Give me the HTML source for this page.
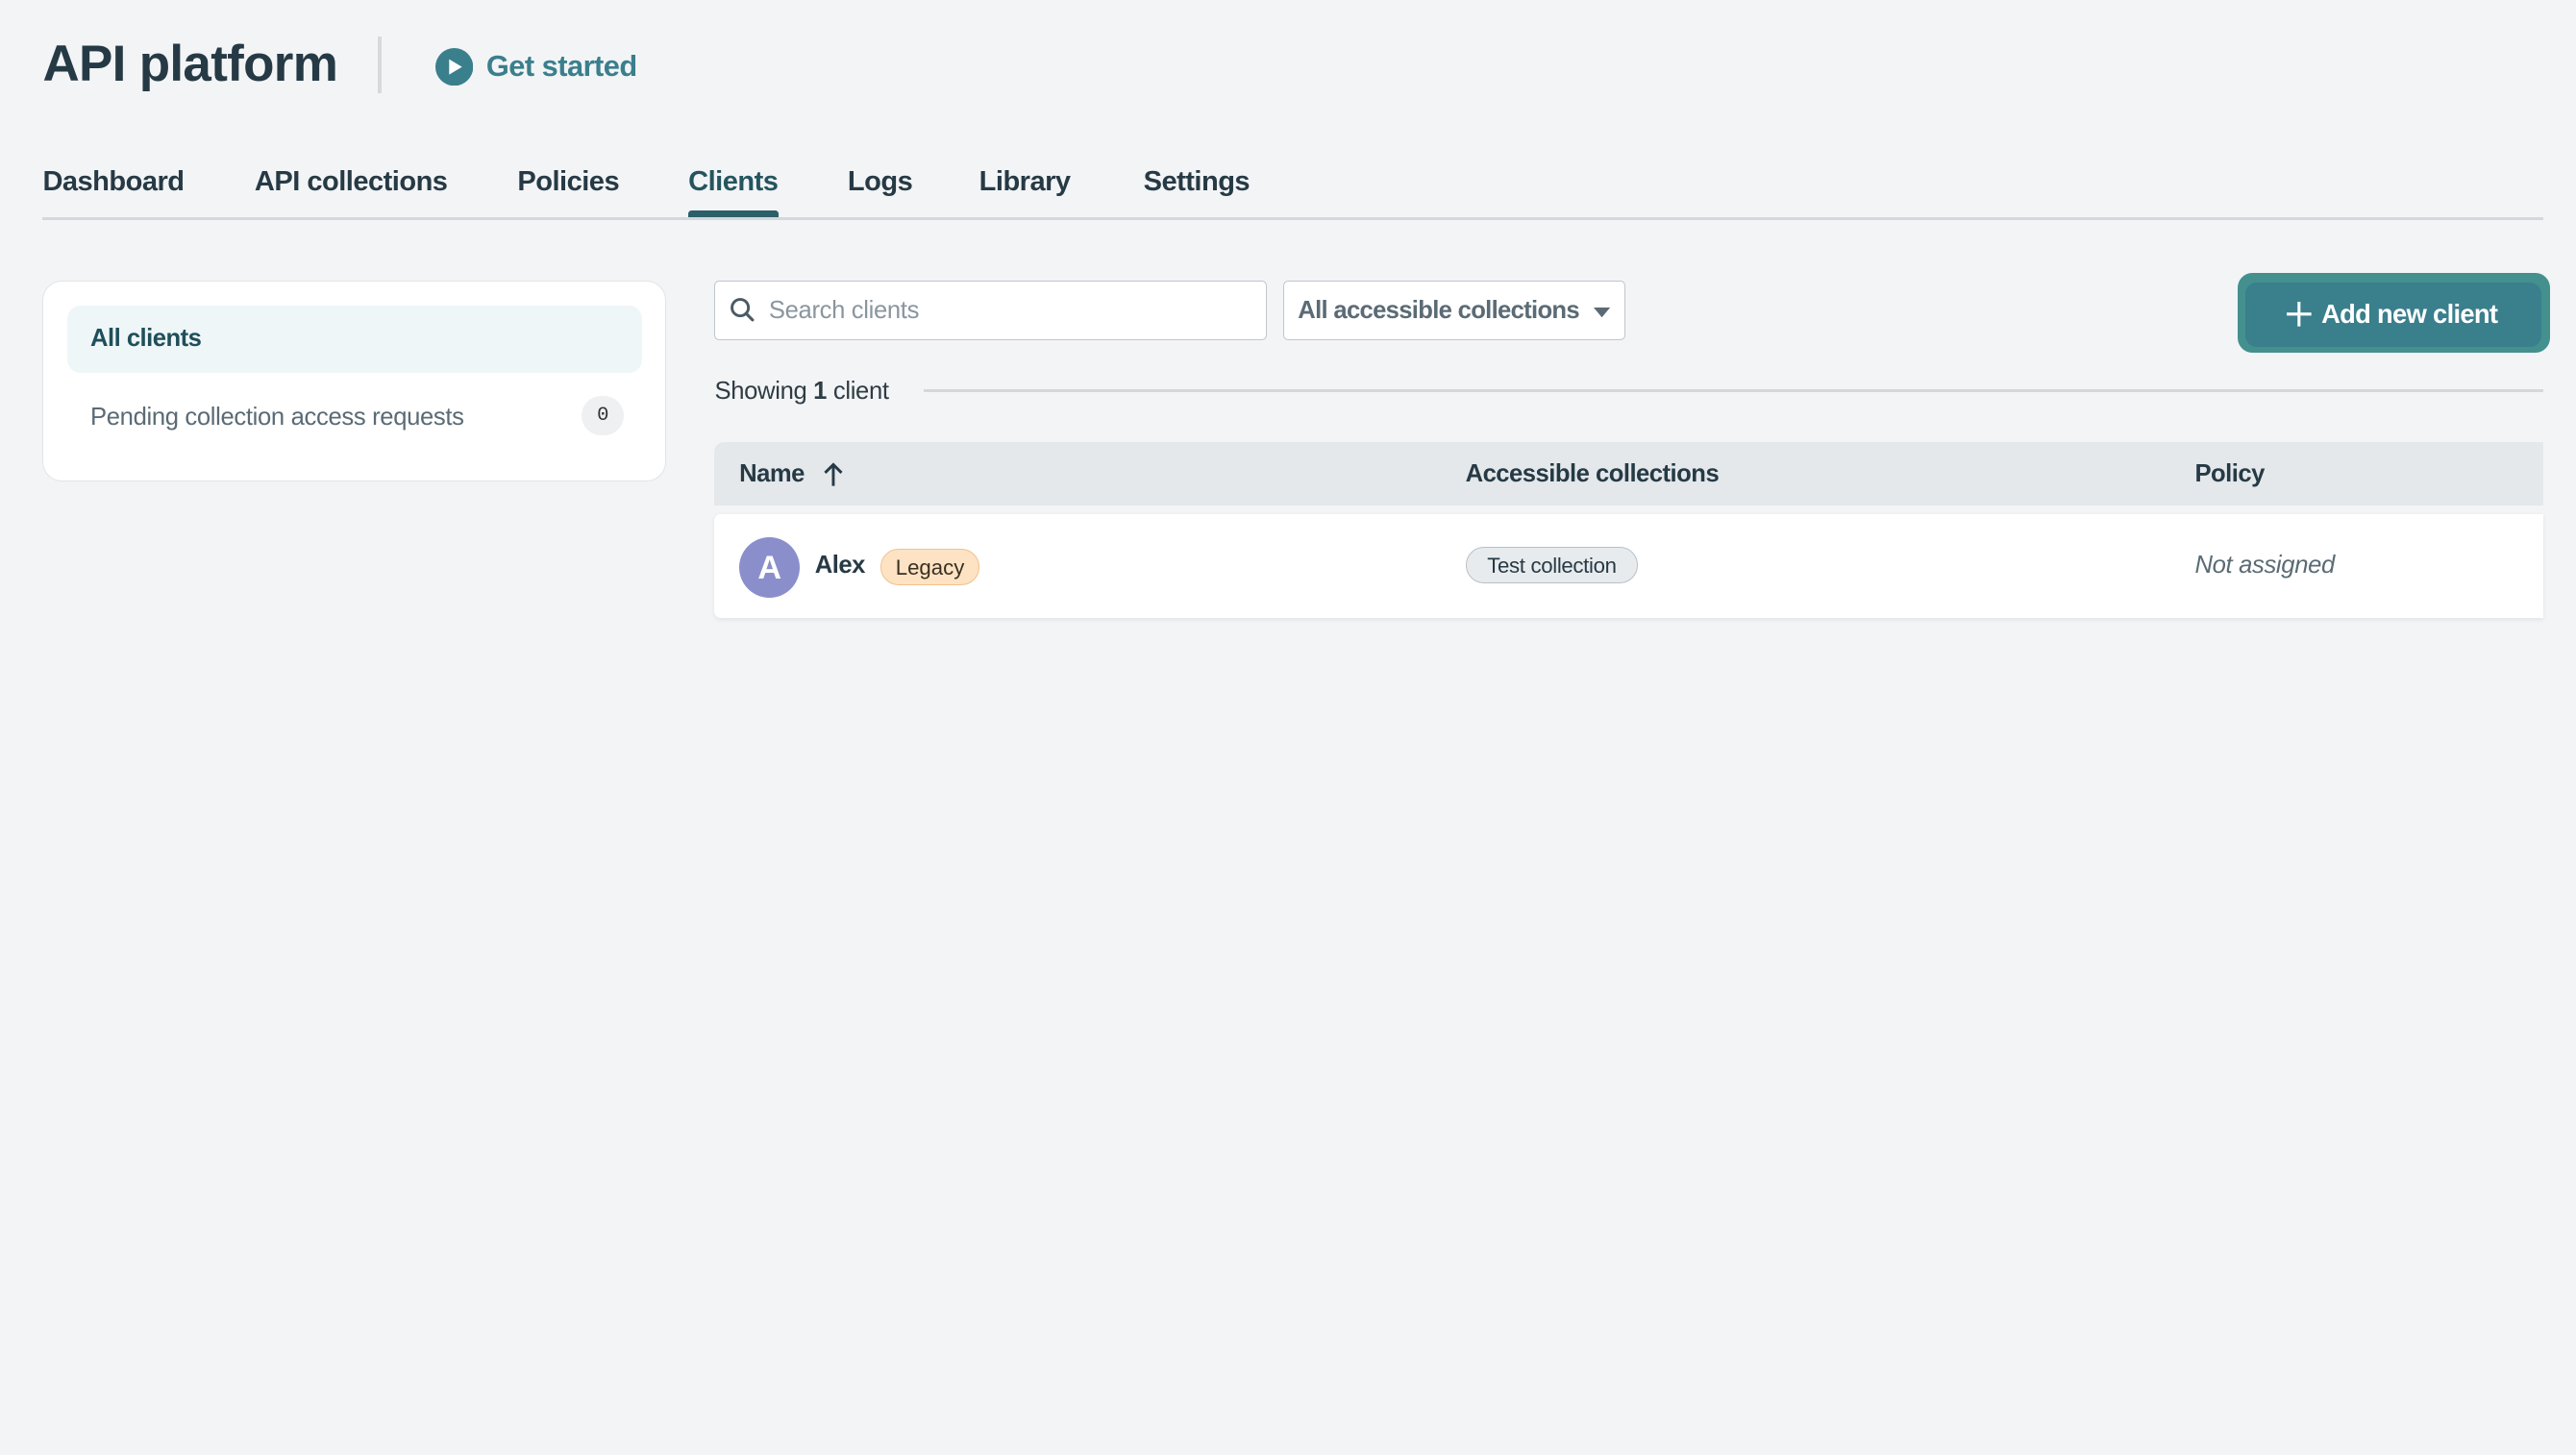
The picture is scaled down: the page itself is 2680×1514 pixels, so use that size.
<!DOCTYPE html>
<html><head><meta charset="utf-8"><style>
html,body{margin:0;padding:0;background:#f3f4f6;}
body{width:1568px;height:886px;zoom:1.70918;position:relative;overflow:hidden;font-family:"Liberation Sans",sans-serif;color:#263a45;}
.a{position:absolute;white-space:nowrap;}
.tab{position:absolute;top:101px;font-size:17px;font-weight:bold;color:#263a45;letter-spacing:-0.3px;}
</style></head><body>
<div class="a" style="left:26px;top:21px;font-size:31px;font-weight:bold;letter-spacing:-0.4px;color:#263a45">API platform</div>
<div class="a" style="left:230px;top:22px;width:2px;height:35px;background:#d6dadd"></div>
<svg class="a" style="left:265px;top:29px" width="23" height="23" viewBox="0 0 22 22"><circle cx="11" cy="11" r="11" fill="#3a7f8c"/><path d="M8 6.5 L15.5 11 L8 15.5Z" fill="#fff"/></svg>
<div class="a" style="left:296px;top:30px;font-size:18px;font-weight:bold;color:#3a7f8c;letter-spacing:-0.3px">Get started</div>

<div class="tab" style="left:26px">Dashboard</div>
<div class="tab" style="left:155px">API collections</div>
<div class="tab" style="left:315px">Policies</div>
<div class="tab" style="left:419px;color:#24555f">Clients</div>
<div class="tab" style="left:516px">Logs</div>
<div class="tab" style="left:596px">Library</div>
<div class="tab" style="left:696px">Settings</div>
<div class="a" style="left:26px;top:132px;width:1522px;height:2px;background:#d3d8dc"></div>
<div class="a" style="left:419px;top:128px;width:55px;height:4px;background:#2c5f68;border-radius:2px 2px 0 0"></div>

<div class="a" style="left:26px;top:171px;width:378px;height:121px;background:#fff;border:1px solid #e1e5e8;border-radius:12px"></div>
<div class="a" style="left:41px;top:186px;width:350px;height:41px;background:#eef6f8;border-radius:8px"></div>
<div class="a" style="left:55px;top:198px;font-size:15px;font-weight:bold;color:#1f4f5a;letter-spacing:-0.3px">All clients</div>
<div class="a" style="left:55px;top:246px;font-size:15px;color:#5a6b75;letter-spacing:-0.2px">Pending collection access requests</div>
<div class="a" style="left:354px;top:241px;width:26px;height:24px;border-radius:12px;background:#eef0f1;font-family:'Liberation Mono',monospace;font-size:12px;text-align:center;line-height:25px;color:#333">0</div>

<div class="a" style="left:435px;top:171px;width:335px;height:35px;background:#fff;border:1px solid #bfc6cc;border-radius:3px"></div>
<svg class="a" style="left:444px;top:181px" width="16" height="16" viewBox="0 0 16 16"><circle cx="6.5" cy="6.5" r="5" fill="none" stroke="#4a5a64" stroke-width="1.7"/><path d="M10 10 L14 14" stroke="#4a5a64" stroke-width="1.8" stroke-linecap="round"/></svg>
<div class="a" style="left:468px;top:181px;font-size:15px;color:#8a969e;letter-spacing:-0.2px">Search clients</div>
<div class="a" style="left:781px;top:171px;width:207px;height:35px;background:#fff;border:1px solid #bfc6cc;border-radius:3px"></div>
<div class="a" style="left:790px;top:181px;font-size:15px;font-weight:bold;color:#5b6b75;letter-spacing:-0.4px">All accessible collections</div>
<svg class="a" style="left:970px;top:187px" width="10" height="6"><path d="M0 0H10L5 6Z" fill="#5b6b75"/></svg>

<div class="a" style="left:1362px;top:166px;width:190px;height:49px;background:#43908f;border-radius:9px"></div>
<div class="a" style="left:1367px;top:172px;width:180px;height:39px;background:#3a7f8c;border-radius:7px"></div>
<svg class="a" style="left:1392px;top:184px" width="15" height="15"><path d="M7.5 0V15M0 7.5H15" stroke="#fff" stroke-width="1.8"/></svg>
<div class="a" style="left:1413px;top:182px;font-size:16px;font-weight:bold;color:#fff;letter-spacing:-0.4px">Add new client</div>

<div class="a" style="left:435px;top:230px;font-size:15px;color:#2e3c44;letter-spacing:-0.2px">Showing <b>1</b> client</div>
<div class="a" style="left:562px;top:237px;width:986px;height:2px;background:#d3d8dc"></div>

<div class="a" style="left:435px;top:269px;width:1113px;height:39px;background:#e4e8eb;border-radius:6px 0 0 0"></div>
<div class="a" style="left:450px;top:280px;font-size:15px;font-weight:bold;letter-spacing:-0.3px">Name</div>
<svg class="a" style="left:500px;top:281px" width="14" height="15"><path d="M7 15V2M2 7L7 2L12 7" fill="none" stroke="#263a45" stroke-width="1.7"/></svg>
<div class="a" style="left:892px;top:280px;font-size:15px;font-weight:bold;letter-spacing:-0.3px">Accessible collections</div>
<div class="a" style="left:1336px;top:280px;font-size:15px;font-weight:bold;letter-spacing:-0.3px">Policy</div>

<div class="a" style="left:435px;top:313px;width:1113px;height:63px;background:#fff;border-radius:4px 0 0 4px;box-shadow:0 1px 3px rgba(0,0,0,0.07)"></div>
<div class="a" style="left:450px;top:327px;width:37px;height:37px;border-radius:50%;background:#8a8fcc;color:#fff;font-size:20px;font-weight:bold;text-align:center;line-height:38px">A</div>
<div class="a" style="left:496px;top:336px;font-size:15px;font-weight:bold;letter-spacing:-0.3px">Alex</div>
<div class="a" style="left:536px;top:334px;width:59px;height:21px;background:#fde3c4;border:1px solid #f3c08a;border-radius:11px;font-size:13px;text-align:center;line-height:22px;color:#3a3020">Legacy</div>
<div class="a" style="left:892px;top:333px;width:104px;height:21px;background:#e8ebee;border:1px solid #b8c0c6;border-radius:11px;font-size:13px;text-align:center;line-height:22px;color:#263a45;letter-spacing:-0.2px">Test collection</div>
<div class="a" style="left:1336px;top:336px;font-size:15px;font-style:italic;color:#5b6b75;letter-spacing:-0.2px">Not assigned</div>
</body></html>
